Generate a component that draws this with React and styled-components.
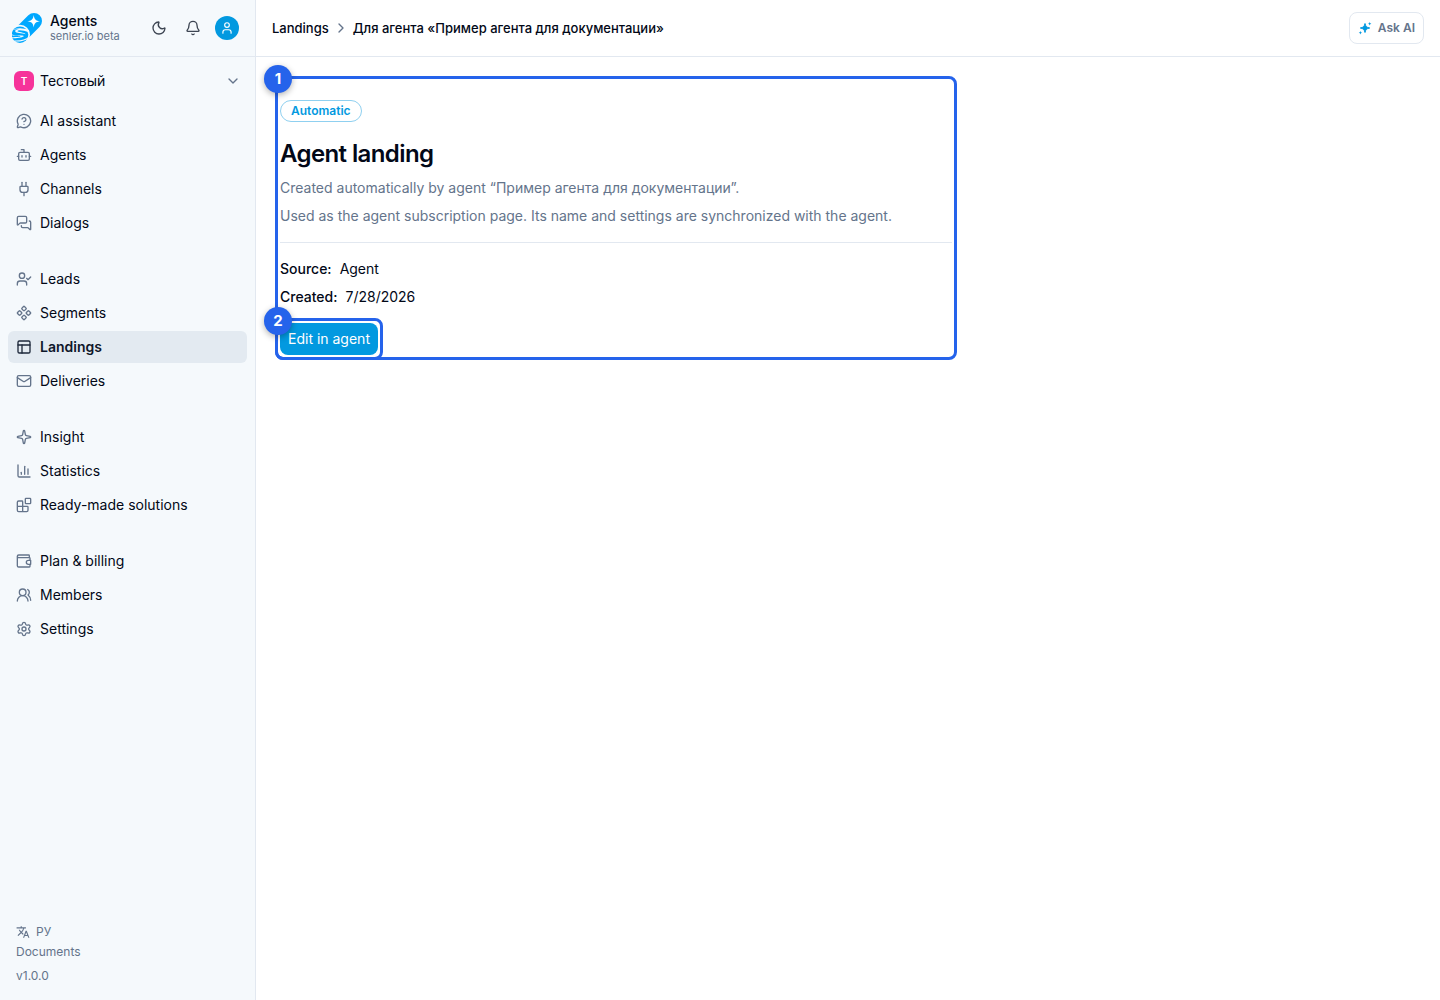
import React from 'react';
import styled, { createGlobalStyle } from 'styled-components';
import {
  Bell, Blocks, Bot, ChartColumn, ChevronDown, ChevronRight, Component, Mail,
  MessageCircleQuestionMark, MessagesSquare, Moon, PanelsTopLeft, Plug, Settings,
  Sparkle, User, UserCheck, UsersRound,
} from 'lucide-react';
import { MdTranslate } from 'react-icons/md';

const GlobalStyle = createGlobalStyle`
  *, *::before, *::after { box-sizing: border-box; }
  body {
    margin: 0;
    font-family: Inter, "Liberation Sans", sans-serif;
    font-size: 14px;
    line-height: 20px;
    color: #020817;
    background: #fff;
  }
  button { font: inherit; color: inherit; cursor: pointer; }
  a { color: inherit; text-decoration: none; }
  h1, p, dl, dd, ul { margin: 0; padding: 0; }
  svg { flex-shrink: 0; }
`;

const Shell = styled.div`
  display: grid;
  grid-template-columns: 256px minmax(0, 1fr);
  min-height: 100vh;
`;

const Sidebar = styled.aside`
  display: flex;
  flex-direction: column;
  background: #f5f9fc;
  border-right: 1px solid #e2e8f0;
`;

const Brand = styled.div`
  display: flex;
  align-items: center;
  height: 57px;
  padding: 0 16px 0 12px;
  border-bottom: 1px solid #e2e8f0;
`;

const BrandText = styled.a`
  display: flex;
  flex: 1;
  align-items: center;
  gap: 8px;
`;

const BrandName = styled.span`
  display: block;
  font-weight: 500;
  line-height: 16px;
`;

const BrandSub = styled.span`
  display: block;
  font-size: 11px;
  line-height: 14px;
  color: #64748b;
`;

const BrandActions = styled.div`
  display: flex;
  align-items: center;
  gap: 10px;
`;

const IconButton = styled.button`
  display: grid;
  place-items: center;
  width: 24px;
  height: 24px;
  padding: 0;
  border: 0;
  border-radius: 50%;
  color: ${(p) => (p.$filled ? '#fff' : '#3d4552')};
  background: ${(p) => (p.$filled ? '#0299e0' : 'transparent')};
`;

const Workspace = styled.button`
  display: flex;
  align-items: center;
  gap: 6px;
  height: 32px;
  margin: 8px;
  padding: 0 6px;
  border: 0;
  background: transparent;
  text-align: left;
  svg { margin-left: auto; color: #64748b; }
`;

const WorkspaceMark = styled.span`
  display: grid;
  place-items: center;
  width: 20px;
  height: 20px;
  border-radius: 6px;
  background: #f6339a;
  color: #fff;
  font-size: 10px;
  font-weight: 600;
`;

const Nav = styled.nav`
  display: flex;
  flex: 1;
  flex-direction: column;
  gap: 24px;
  padding: 0 8px;
`;

const NavGroup = styled.ul`
  display: grid;
  gap: 2px;
  list-style: none;
`;

const NavLink = styled.a`
  display: flex;
  align-items: center;
  gap: 8px;
  height: 32px;
  padding: 0 8px;
  border-radius: 6px;
  background: ${(p) => (p.$active ? '#e3eaf1' : 'transparent')};
  font-weight: ${(p) => (p.$active ? 600 : 400)};
  color: ${(p) => (p.$active ? '#0f172a' : '#020817')};
  svg { color: ${(p) => (p.$active ? '#1e293b' : '#64748b')}; }
`;

const SideFooter = styled.footer`
  display: grid;
  justify-items: start;
  padding: 0 16px 16px;
  font-size: 12px;
  line-height: 16px;
  color: #64748b;
`;

const LanguageButton = styled.button`
  display: flex;
  align-items: center;
  gap: 6px;
  padding: 0;
  border: 0;
  background: transparent;
`;

const FooterLink = styled.a`
  margin: 4px 0 8px;
`;

const Page = styled.div`
  min-width: 0;
`;

const TopBar = styled.header`
  display: flex;
  align-items: center;
  justify-content: space-between;
  height: 57px;
  padding: 0 16px;
  border-bottom: 1px solid #e2e8f0;
`;

const Crumbs = styled.nav`
  display: flex;
  align-items: center;
  gap: 4px;
  font-size: 13px;
  font-weight: 500;
  svg { color: #64748b; }
`;

const AskButton = styled.button`
  display: flex;
  align-items: center;
  gap: 6px;
  height: 32px;
  padding: 0 8px;
  border: 1px solid #e2e8f0;
  border-radius: 8px;
  background: #fff;
  font-size: 12px;
  font-weight: 600;
  color: #64748b;
  svg { color: #0299e0; }
`;

const Main = styled.main`
  padding: 24px;
`;

const Highlighted = styled.div`
  position: relative;
  width: ${(p) => (p.$block ? 'auto' : 'fit-content')};
  max-width: 672px;
  &::after {
    content: '';
    position: absolute;
    inset: -5px;
    border: 3px solid #2563eb;
    border-radius: 8px;
    pointer-events: none;
  }
`;

const Marker = styled.span`
  position: absolute;
  top: -16px;
  left: -16px;
  z-index: 1;
  display: grid;
  place-items: center;
  width: 28px;
  height: 28px;
  border-radius: 50%;
  background: #2563eb;
  box-shadow: 0 2px 6px rgba(0, 0, 0, 0.3);
  color: #fff;
  font-size: 15px;
  font-weight: 700;
`;

const Details = styled.section`
  padding-top: 19px;
`;

const Badge = styled.span`
  display: block;
  width: fit-content;
  padding: 2px 10px;
  border: 1px solid #8fd0f0;
  border-radius: 11px;
  font-size: 12px;
  font-weight: 600;
  line-height: 16px;
  color: #0299e0;
`;

const Title = styled.h1`
  margin-top: 16px;
  font-size: 24px;
  font-weight: 600;
  line-height: 32px;
  letter-spacing: -0.025em;
`;

const Lead = styled.p`
  margin-top: 8px;
  color: #64748b;
`;

const Facts = styled.dl`
  display: grid;
  gap: 8px;
  margin: 16px 0;
  padding-top: 16px;
  border-top: 1px solid #e2e8f0;
`;

const Fact = styled.div`
  display: flex;
  gap: 8px;
  dt { font-weight: 500; }
`;

const PrimaryButton = styled.button`
  display: block;
  height: 32px;
  padding: 0 8px;
  border: 0;
  border-radius: 8px;
  background: #0299e0;
  color: #fff;
`;

const Logo = () => (
  <svg width="30" height="30" viewBox="0 0 30 30" aria-hidden="true">
    <path d="M22 8 12 18" stroke="#00a8ff" strokeWidth="16" strokeLinecap="round" />
    <circle cx="8" cy="21.700" r="10" fill="#f5f9fc" />
    <circle cx="8" cy="21.700" r="8.300" fill="#00a8ff" />
    <path fill="#fff" d="M21.700 2C22.300 6.300 23.700 7.700 28 8.300 23.700 8.900 22.300 10.300 21.700 14.600 21.100 10.300 19.700 8.900 15.400 8.300 19.700 7.700 21.100 6.300 21.700 2Z" />
    <path fill="#f5f9fc" d="M0 17.500C4 14.500 11 14.500 17 17.200L17 19.300C12 17.400 6 16.600 5.500 18 5 19.400 13 19.300 13.500 21.200 10 19.600 3.500 20.500 3.200 18.200 3.100 17 5 16.300 7 16 4 16 2 16.500 0 17.500ZM-1 21C3 23 11.500 21.600 11.800 23 12 24.400 5 25.500 0 25.200L0 24.200C4 24.200 8.500 23.900 8.500 23.300 8.500 22.600 2 23.300-1 22ZM2 27.500C8 28 14 26.500 17 23.500L17 25C13 28 7 29 3 28.500Z" />
  </svg>
);

const WalletIcon = ({ size = 16, strokeWidth = 2 }) => (
  <svg width={size} height={size} viewBox="0 0 24 24" fill="none" stroke="currentColor" strokeWidth={strokeWidth} strokeLinecap="round" strokeLinejoin="round" aria-hidden="true">
    <path d="M20 7V4a1 1 0 0 0-1-1H4a2 2 0 0 0 0 4h16a1 1 0 0 1 1 1v3M2 5v14a2 2 0 0 0 2 2h16a1 1 0 0 0 1-1v-3" />
    <path d="M22 11h-3.500a3 3 0 0 0 0 6H22Z" />
  </svg>
);

const AskIcon = () => (
  <svg width="14" height="14" viewBox="0 0 14 14" fill="currentColor" aria-hidden="true">
    <path d="M7 2.500C7.700 5.500 8.500 6.300 11.700 7 8.500 7.700 7.700 8.500 7 11.500 6.300 8.500 5.500 7.700 2.300 7 5.500 6.300 6.300 5.500 7 2.500Z" stroke="currentColor" strokeLinejoin="round" />
    <path d="M11.700 1 12.200 2.200 13.400 2.700 12.200 3.200 11.700 4.400 11.200 3.200 10 2.700 11.200 2.200ZM2.400 10 2.900 11.200 4.100 11.700 2.900 12.200 2.400 13.400 1.900 12.200.700 11.700 1.900 11.200Z" />
  </svg>
);

const groups = [
  [
    ['AI assistant', MessageCircleQuestionMark],
    ['Agents', Bot],
    ['Channels', Plug],
    ['Dialogs', MessagesSquare],
  ],
  [
    ['Leads', UserCheck],
    ['Segments', Component],
    ['Landings', PanelsTopLeft],
    ['Deliveries', Mail],
  ],
  [
    ['Insight', Sparkle],
    ['Statistics', ChartColumn],
    ['Ready-made solutions', Blocks],
  ],
  [
    ['Plan & billing', WalletIcon],
    ['Members', UsersRound],
    ['Settings', Settings],
  ],
];

export default function App() {
  return (
    <>
      <GlobalStyle />
      <Shell>
        <Sidebar>
          <Brand>
            <BrandText href="#">
              <Logo />
              <span>
                <BrandName>Agents</BrandName>
                <BrandSub>senler.io beta</BrandSub>
              </span>
            </BrandText>
            <BrandActions>
              <IconButton aria-label="Theme"><Moon size={16} /></IconButton>
              <IconButton aria-label="Notifications"><Bell size={16} /></IconButton>
              <IconButton aria-label="Account" $filled><User size={14} /></IconButton>
            </BrandActions>
          </Brand>
          <Workspace>
            <WorkspaceMark>Т</WorkspaceMark>
            Тестовый
            <ChevronDown size={16} />
          </Workspace>
          <Nav aria-label="Sections">
            {groups.map((items) => (
              <NavGroup key={items[0][0]}>
                {items.map(([label, Icon]) => (
                  <li key={label}>
                    <NavLink href="#" $active={label === 'Landings'}>
                      <Icon size={16} />
                      {label}
                    </NavLink>
                  </li>
                ))}
              </NavGroup>
            ))}
          </Nav>
          <SideFooter>
            <LanguageButton><MdTranslate size={14} />РУ</LanguageButton>
            <FooterLink href="#">Documents</FooterLink>
            <span>v1.0.0</span>
          </SideFooter>
        </Sidebar>
        <Page>
          <TopBar>
            <Crumbs aria-label="Breadcrumb">
              <a href="#">Landings</a>
              <ChevronRight size={16} />
              <span>Для агента «Пример агента для документации»</span>
            </Crumbs>
            <AskButton><AskIcon />Ask AI</AskButton>
          </TopBar>
          <Main>
            <Highlighted $block>
              <Marker>1</Marker>
              <Details>
                <Badge>Automatic</Badge>
                <Title>Agent landing</Title>
                <Lead>Created automatically by agent “Пример агента для документации”.</Lead>
                <Lead>Used as the agent subscription page. Its name and settings are synchronized with the agent.</Lead>
                <Facts>
                  <Fact><dt>Source:</dt><dd>Agent</dd></Fact>
                  <Fact><dt>Created:</dt><dd>7/28/2026</dd></Fact>
                </Facts>
                <Highlighted>
                  <Marker>2</Marker>
                  <PrimaryButton>Edit in agent</PrimaryButton>
                </Highlighted>
              </Details>
            </Highlighted>
          </Main>
        </Page>
      </Shell>
    </>
  );
}
